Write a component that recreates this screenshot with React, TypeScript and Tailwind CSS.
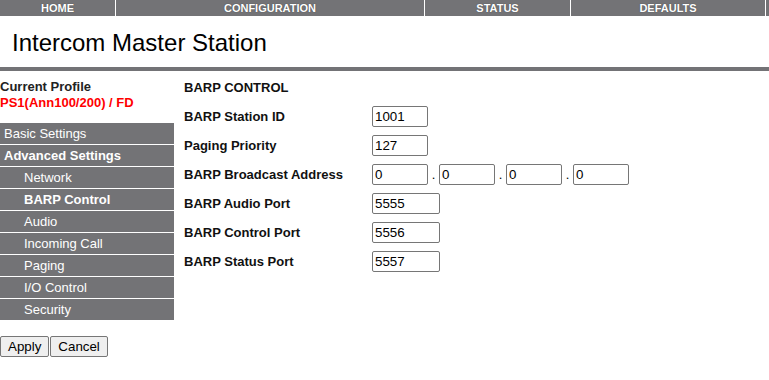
import React from "react";

const tabs = [
  { label: "HOME", w: "w-[116px]" },
  { label: "CONFIGURATION", w: "w-[309px]" },
  { label: "STATUS", w: "w-[146px]" },
  { label: "DEFAULTS", w: "w-[195px]" },
];

const menu = [
  { label: "Basic Settings", sub: false, bold: false },
  { label: "Advanced Settings", sub: false, bold: true },
  { label: "Network", sub: true, bold: false },
  { label: "BARP Control", sub: true, bold: true },
  { label: "Audio", sub: true, bold: false },
  { label: "Incoming Call", sub: true, bold: false },
  { label: "Paging", sub: true, bold: false },
  { label: "I/O Control", sub: true, bold: false },
  { label: "Security", sub: true, bold: false },
];

function Field({ value, wide }: { value: string; wide?: boolean }) {
  return (
    <input
      readOnly
      defaultValue={value}
      className={`h-[21px] ${wide ? "w-[68px]" : "w-[56px]"} rounded-[2px] border border-[#767676] bg-white px-[2px] text-[13.33px] text-black outline-none`}
    />
  );
}

function Row({ label, children }: { label: string; children: React.ReactNode }) {
  return (
    <div className="flex h-[21px] items-center">
      <div className="w-[188px] text-[13px] font-bold text-[#111]">{label}</div>
      <div className="flex items-center">{children}</div>
    </div>
  );
}

export default function App() {
  return (
    <div className="h-[380px] w-[769px] bg-white font-['Liberation_Sans',Arial,sans-serif] text-black">
      <nav className="flex h-[16px] bg-[#737376]">
        {tabs.map((t) => (
          <div
            key={t.label}
            className={`${t.w} flex items-center justify-center border-r border-white text-[11px] font-bold leading-[16px] text-white [text-shadow:0_0_1px_rgba(0,0,0,0.5)]`}
          >
            {t.label}
          </div>
        ))}
      </nav>

      <div className="flex h-[51px] items-center pl-[12px] pt-[2px] text-[24px] leading-[28px]">
        Intercom Master Station
      </div>
      <div className="h-[4px] bg-[#737376]" />

      <div className="flex">
        <aside className="w-[174px] pt-[8px]">
          <div className="text-[13px] font-bold leading-[16px] text-[#222]">Current Profile</div>
          <div className="text-[13px] font-bold leading-[16px] text-[#ff0000]">PS1(Ann100/200) / FD</div>

          <ul className="mt-[12px] flex flex-col gap-px">
            {menu.map((m) => (
              <li
                key={m.label}
                className={`h-[21px] bg-[#737376] text-[13px] leading-[21px] text-white ${m.sub ? "pl-[24px]" : "pl-[4px]"} ${m.bold ? "font-bold" : ""}`}
              >
                {m.label}
              </li>
            ))}
          </ul>

          <div className="mt-[16px] flex gap-px">
            <button className="h-[21px] rounded-[2px] border border-[#767676] bg-[#efefef] px-[7px] text-[13.33px] leading-[15px]">
              Apply
            </button>
            <button className="h-[21px] rounded-[2px] border border-[#767676] bg-[#efefef] px-[7px] text-[13.33px] leading-[15px]">
              Cancel
            </button>
          </div>
        </aside>

        <main className="ml-[10px] pt-[9px]">
          <div className="text-[13px] font-bold leading-[16px] text-[#111]">BARP CONTROL</div>
          <div className="mt-[10px] flex flex-col gap-[8px]">
            <Row label="BARP Station ID">
              <Field value="1001" />
            </Row>
            <Row label="Paging Priority">
              <Field value="127" />
            </Row>
            <Row label="BARP Broadcast Address">
              <Field value="0" />
              <span className="w-[11px] text-center text-[13px]">.</span>
              <Field value="0" />
              <span className="w-[11px] text-center text-[13px]">.</span>
              <Field value="0" />
              <span className="w-[11px] text-center text-[13px]">.</span>
              <Field value="0" />
            </Row>
            <Row label="BARP Audio Port">
              <Field value="5555" wide />
            </Row>
            <Row label="BARP Control Port">
              <Field value="5556" wide />
            </Row>
            <Row label="BARP Status Port">
              <Field value="5557" wide />
            </Row>
          </div>
        </main>
      </div>
    </div>
  );
}
